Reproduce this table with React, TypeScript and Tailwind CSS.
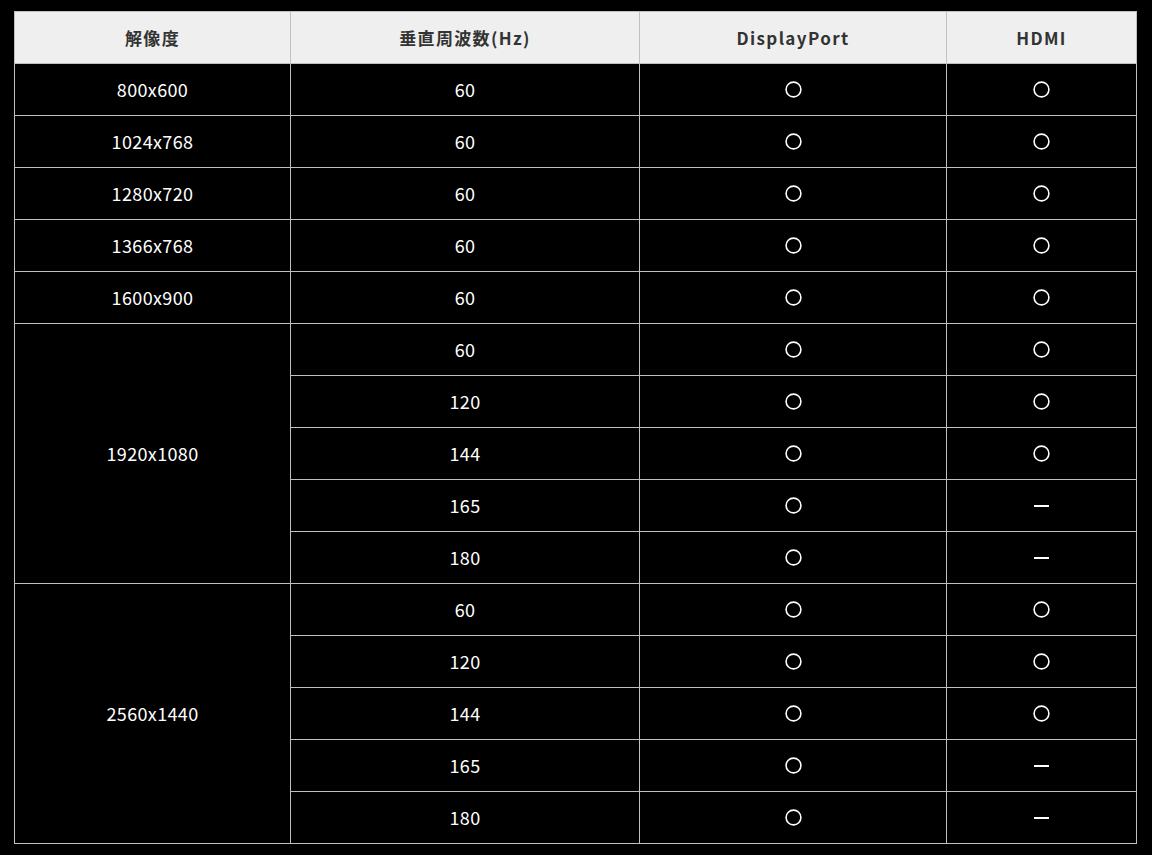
const GROUPS: { res: string; rows: { hz: string; dp: boolean; hdmi: boolean }[] }[] = [
  { res: '800x600', rows: [{ hz: '60', dp: true, hdmi: true }] },
  { res: '1024x768', rows: [{ hz: '60', dp: true, hdmi: true }] },
  { res: '1280x720', rows: [{ hz: '60', dp: true, hdmi: true }] },
  { res: '1366x768', rows: [{ hz: '60', dp: true, hdmi: true }] },
  { res: '1600x900', rows: [{ hz: '60', dp: true, hdmi: true }] },
  {
    res: '1920x1080',
    rows: [
      { hz: '60', dp: true, hdmi: true },
      { hz: '120', dp: true, hdmi: true },
      { hz: '144', dp: true, hdmi: true },
      { hz: '165', dp: true, hdmi: false },
      { hz: '180', dp: true, hdmi: false },
    ],
  },
  {
    res: '2560x1440',
    rows: [
      { hz: '60', dp: true, hdmi: true },
      { hz: '120', dp: true, hdmi: true },
      { hz: '144', dp: true, hdmi: true },
      { hz: '165', dp: true, hdmi: false },
      { hz: '180', dp: true, hdmi: false },
    ],
  },
];

const cell = 'border border-[#c0c0c0] h-[52px] p-0 text-center align-middle';

function Mark({ ok }: { ok: boolean }) {
  if (!ok) {
    return <span aria-label="—" className="block mx-auto w-[15px] h-[2px] bg-white" />;
  }
  return (
    <svg width="17" height="17" viewBox="0 0 17 17" className="block mx-auto" aria-label="○">
      <circle cx="8.5" cy="8.5" r="7.4" fill="none" stroke="#fff" strokeWidth="1.6" />
    </svg>
  );
}

export default function App() {
  return (
    <div className="min-h-[855px] bg-black pt-[11px] pl-[14px] font-['Noto_Sans_CJK_JP','Noto_Sans',sans-serif]">
      <table className="w-[1123px] border-collapse table-fixed text-white">
        <colgroup>
          <col className="w-[276px]" />
          <col className="w-[349px]" />
          <col className="w-[307px]" />
          <col className="w-[190px]" />
        </colgroup>
        <thead>
          <tr className="bg-[#efefef] text-[#333] text-[17px] font-bold tracking-[0.08em]">
            <th className={cell}>解像度</th>
            <th className={cell}>垂直周波数(Hz)</th>
            <th className={cell}>DisplayPort</th>
            <th className={cell}>HDMI</th>
          </tr>
        </thead>
        <tbody className="text-[18px] font-normal tracking-[0.02em]">
          {GROUPS.map(g =>
            g.rows.map((r, i) => (
              <tr key={g.res + r.hz}>
                {i === 0 && (
                  <td className={cell} rowSpan={g.rows.length}>
                    {g.res}
                  </td>
                )}
                <td className={cell}>{r.hz}</td>
                <td className={cell}>
                  <Mark ok={r.dp} />
                </td>
                <td className={cell}>
                  <Mark ok={r.hdmi} />
                </td>
              </tr>
            )),
          )}
        </tbody>
      </table>
    </div>
  );
}
